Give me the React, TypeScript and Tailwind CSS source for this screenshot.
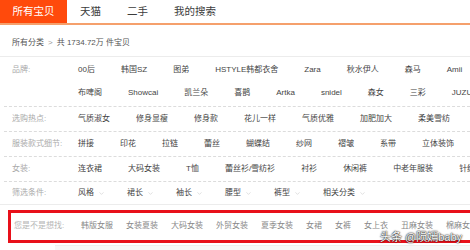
import { ChevronDown } from "lucide-react";

const brandsA = ["00后", "韩国SZ", "图弟", "HSTYLE韩都衣舍", "Zara", "秋水伊人", "森马", "Amii"];
const brandsB = ["布啤阁", "Showcai", "凯兰朵", "喜鹊", "Artka", "snidel", "森女", "三彩", "JUZUI玖姿"];

const rows = [
  { label: "选购热点:", items: ["气质淑女", "修身显瘦", "修身款", "花儿一样", "气质优雅", "加肥加大", "柔美雪纺"] },
  { label: "服装款式细节:", items: ["拼接", "印花", "拉链", "蕾丝", "蝴蝶结", "纱网", "褶皱", "系带", "立体装饰"] },
  { label: "女装:", items: ["连衣裙", "大码女装", "T恤", "蕾丝衫/雪纺衫", "衬衫", "休闲裤", "中老年服装", "针织衫"] },
];

const filters = ["风格", "裙长", "袖长", "腰型", "裤型", "相关分类"];
const guesses = ["韩版女服", "女装夏装", "大码女装", "外贸女装", "夏季女装", "女裙", "女裤", "女上衣", "丑麻女装", "棉麻女装"];

function Line({ items }: { items: string[] }) {
  return (
    <div className="flex h-[23px] items-center gap-x-[26px] whitespace-nowrap">
      {items.map((t) => (
        <span key={t}>{t}</span>
      ))}
    </div>
  );
}

export default function App() {
  return (
    <div className="relative h-[250px] w-[470px] overflow-hidden bg-white font-['Liberation_Sans','Noto_Sans_CJK_SC',sans-serif] text-[8px] text-[#444]">
      {/* tabs */}
      <div className="flex h-[25px] border-b-2 border-[#f5a06c] text-[10.5px] text-[#3c3c3c]">
        <div className="flex w-[67px] items-center justify-center bg-[#ff4a0c] text-white">所有宝贝</div>
        <div className="flex items-center px-[13px]">天猫</div>
        <div className="flex items-center px-[13px]">二手</div>
        <div className="flex items-center px-[13px]">我的搜索</div>
      </div>

      {/* breadcrumb */}
      <div className="flex h-[32px] items-center border-b border-[#ececec] pl-[12px] pt-[4px] text-[#555]">
        所有分类 <span className="mx-[4px] text-[#999]">&gt;</span> 共 1734.72万 件宝贝
      </div>

      {/* brands */}
      <div className="ml-[4px] flex overflow-hidden border-b border-dashed border-[#dcdcdc] pt-[1px] pb-[2px]">
        <div className="w-[74px] shrink-0 pl-[8px] leading-[23px] text-[#aaa]">品牌:</div>
        <div className="flex flex-col">
          <Line items={brandsA} />
          <Line items={brandsB} />
        </div>
      </div>

      {rows.map((r) => (
        <div key={r.label} className="ml-[4px] flex h-[25px] items-center overflow-hidden border-b border-dashed border-[#dcdcdc]">
          <div className="w-[74px] shrink-0 pl-[8px] whitespace-nowrap text-[#aaa]">{r.label}</div>
          <Line items={r.items} />
        </div>
      ))}

      {/* filters */}
      <div className="flex h-[23px] items-center border-b border-[#ececec] pl-[4px]">
        <div className="w-[74px] shrink-0 pl-[8px] text-[#aaa]">筛选条件:</div>
        <div className="flex gap-x-[22px] whitespace-nowrap">
          {filters.map((f) => (
            <span key={f} className="flex items-center gap-[4px]">
              {f}
              <ChevronDown size={7} strokeWidth={1.5} className="text-[#bbb]" />
            </span>
          ))}
        </div>
      </div>

      {/* suggestions, boxed in red */}
      <div className="ml-[8px] mt-[5px] flex h-[33px] w-[470px] items-center overflow-hidden border-[3px] border-[#e8101a] pl-[3px] pb-[2px] whitespace-nowrap text-[#888]">
        <div className="w-[67px] shrink-0 text-[#b5b5b5]">您是不是想找:</div>
        <div className="flex gap-x-[13px]">
          {guesses.map((g) => (
            <span key={g}>{g}</span>
          ))}
        </div>
      </div>

      <div className="mt-[2px] ml-[55px] h-[10px] border-t border-[#eee] bg-[#f7f7f7]" />

      <div className="absolute bottom-[7px] right-[8px] text-[11px] leading-none text-white [text-shadow:0_0_2px_#000,0_0_1px_#000]">
        头条 @陨嫣baby
      </div>
    </div>
  );
}
